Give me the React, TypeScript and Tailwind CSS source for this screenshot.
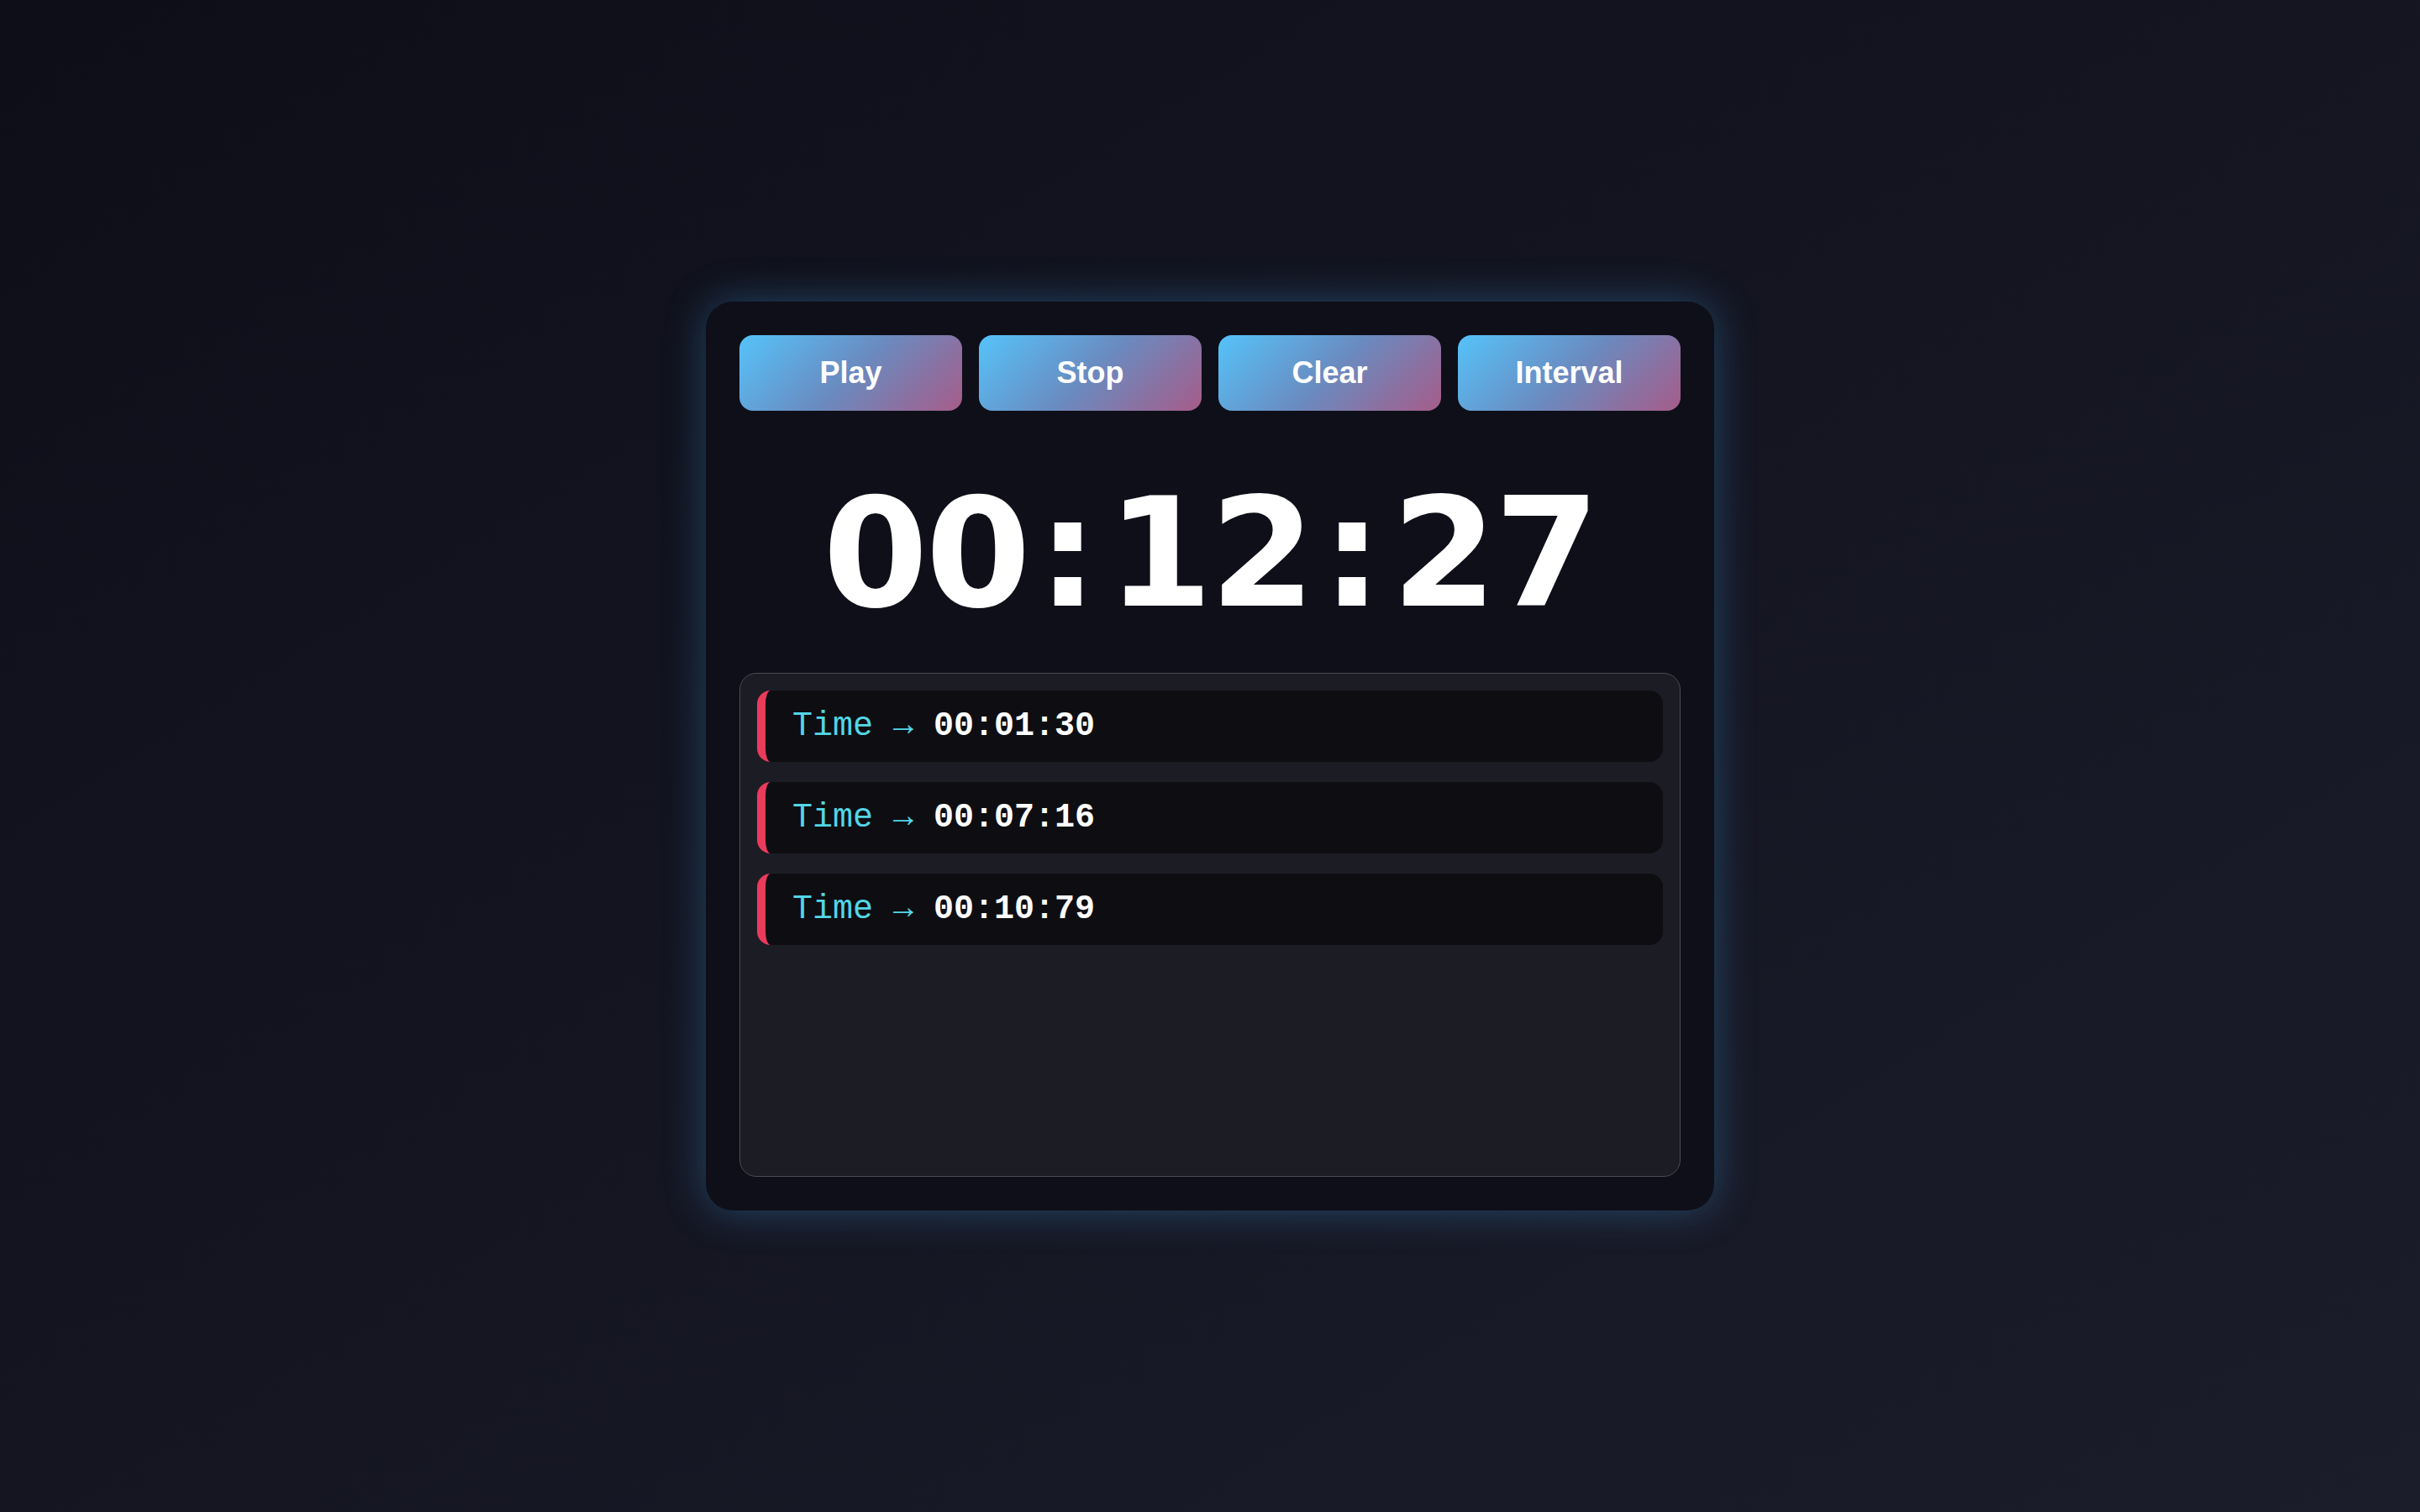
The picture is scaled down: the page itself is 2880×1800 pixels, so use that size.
import React from 'react'

const laps = ['00:01:30', '00:07:16', '00:10:79']
const actions = ['Play', 'Stop', 'Clear', 'Interval']

function Colon() {
  return <span className="inline-block w-[94px] text-center tracking-normal">:</span>
}

export default function App() {
  return (
    <div className="flex min-h-screen w-full items-center justify-center bg-linear-to-br from-[#0d0e18] to-[#1c1d2b]">
      <div className="flex w-[1200px] flex-col rounded-[32px] bg-[#0f0f19] p-10 shadow-[0_0_48px_rgba(60,150,215,0.38)]">
        {/* buttons */}
        <div className="grid grid-cols-4 gap-5">
          {actions.map((label) => (
            <button
              key={label}
              className="h-[90px] rounded-2xl bg-[linear-gradient(135deg,#55c3fa_0%,#6a8bc0_50%,#a65c89_100%)] font-['Liberation_Sans',Arial,sans-serif] text-[36px] font-bold text-white"
            >
              {label}
            </button>
          ))}
        </div>

        {/* timer */}
        <div className="mt-[80px] mb-[52px] flex justify-center font-['DejaVu_Sans',sans-serif] text-[180px] leading-none font-bold whitespace-nowrap text-white">
          <span className="tracking-[-3px]">00</span>
          <Colon />
          <span className="tracking-[-3px]">12</span>
          <Colon />
          <span className="tracking-[-3px]">27</span>
        </div>

        {/* laps */}
        <div className="flex h-[600px] flex-col gap-6 rounded-[20px] border border-[#4a4a56] bg-[#1c1c25] p-5">
          {laps.map((t) => (
            <div
              key={t}
              className="rounded-2xl border-l-[10px] border-[#ea3b5b] bg-[#0e0e12] px-8 py-5 font-['Liberation_Mono','Courier_New',monospace] text-[40px] leading-[45px] text-[#52d6e8]"
            >
              Time → <span className="font-bold text-white">{t}</span>
            </div>
          ))}
        </div>
      </div>
    </div>
  )
}
